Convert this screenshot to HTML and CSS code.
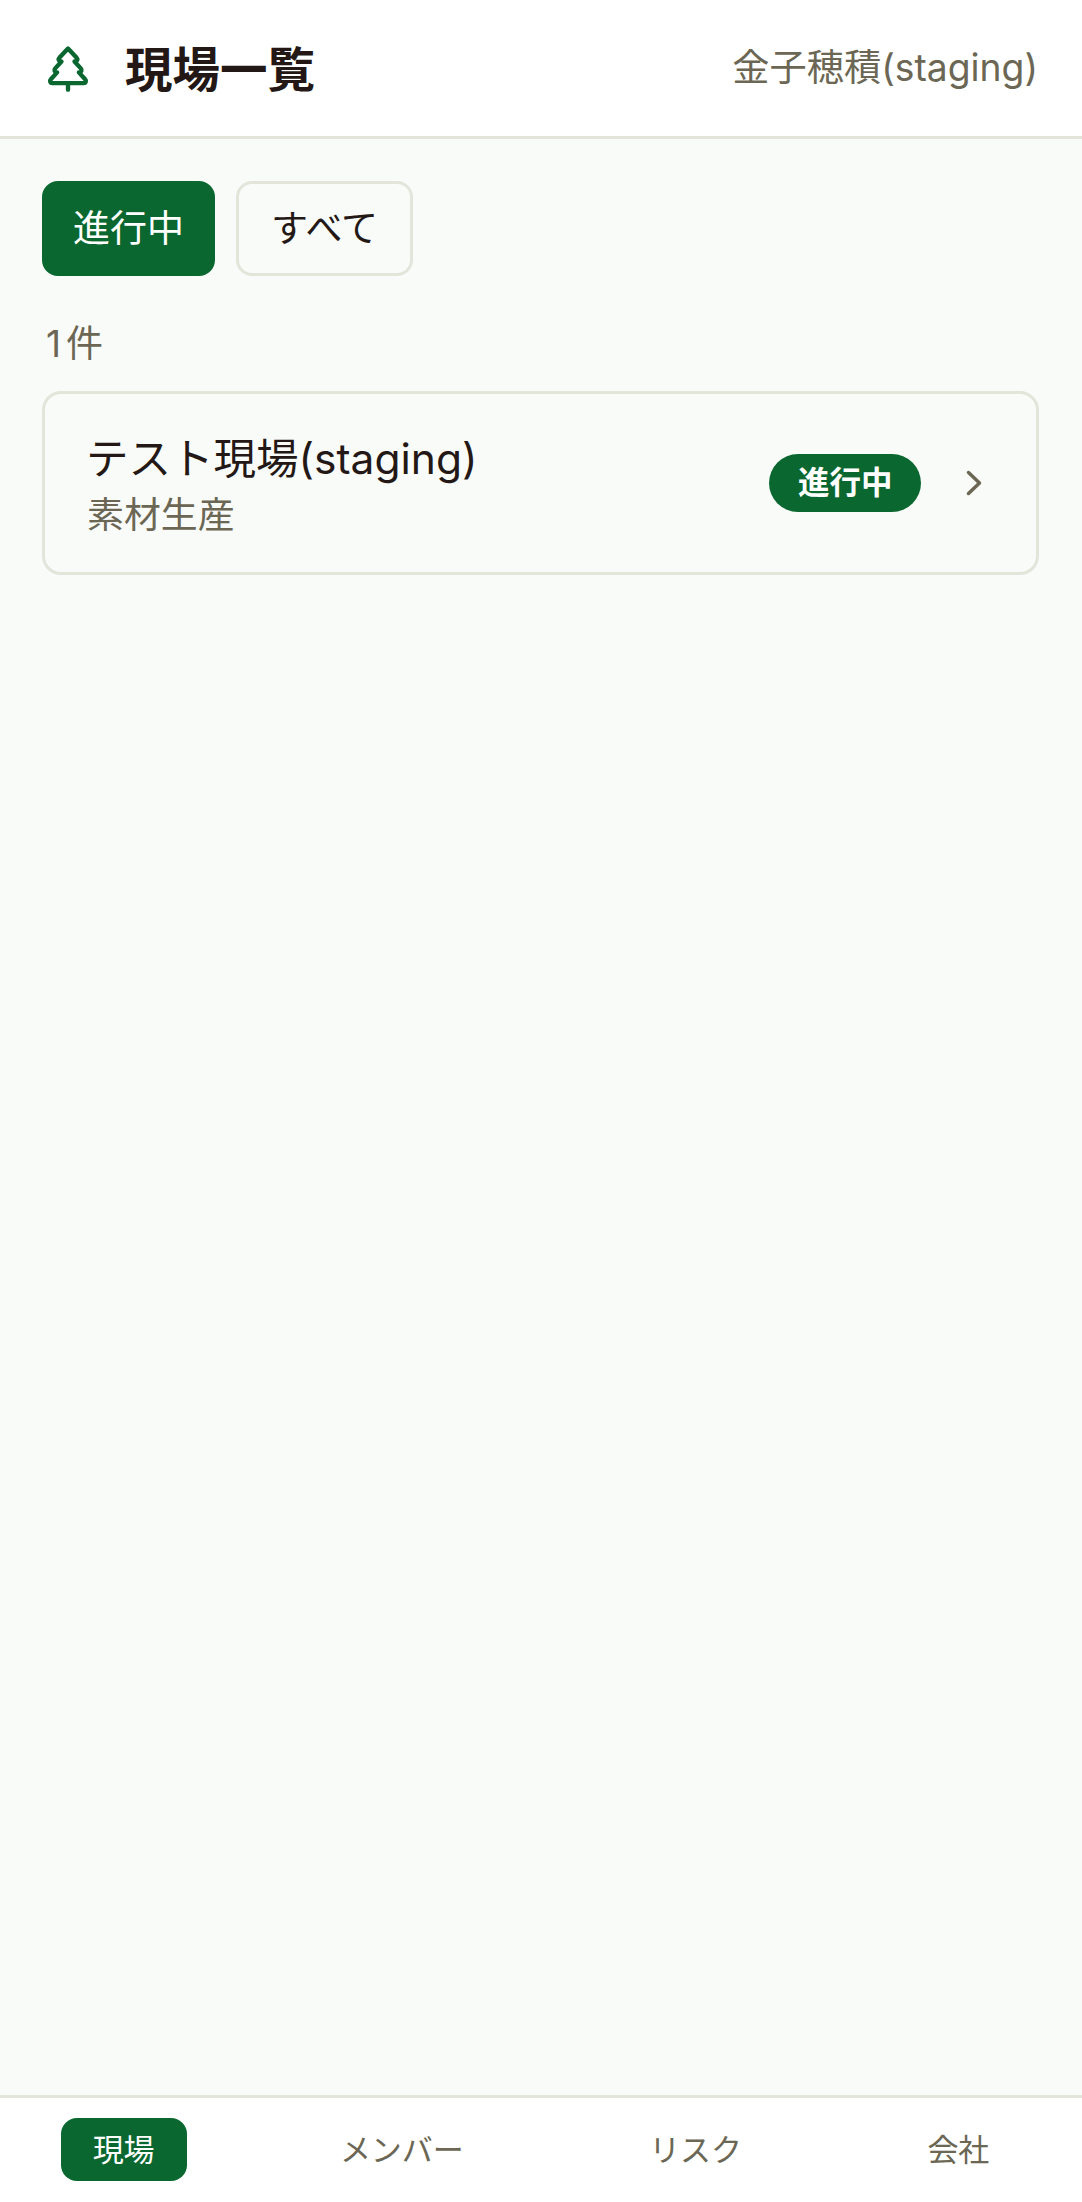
FILE: index.html
```html
<!DOCTYPE html>
<html lang="ja">
<head>
    <meta charset="UTF-8">
    <meta name="viewport" content="width=device-width, initial-scale=1.0">
    <title>現場一覧</title>
    <link rel="stylesheet" href="styles.css">
</head>
<body>

    <div class="app">
        <!-- Header -->
        <header class="header">
            <div class="header-left">
                <svg class="logo" viewBox="0 0 24 24" fill="none" stroke="currentColor" stroke-width="2" stroke-linecap="round" stroke-linejoin="round">
                    <path d="m17 14 3 3.3a1 1 0 0 1-.7 1.7H4.7a1 1 0 0 1-.7-1.7L7 14h-.3a1 1 0 0 1-.7-1.7L9 9h-.2A1 1 0 0 1 8 7.3L12 3l4 4.3a1 1 0 0 1-.8 1.7H15l3 3.3a1 1 0 0 1-.7 1.7H17Z"/>
                    <path d="M12 22v-3"/>
                </svg>
                <h1>現場一覧</h1>
            </div>
            <span class="user-name">金子穂積(staging)</span>
        </header>

        <!-- Site list -->
        <main class="main">
            <div class="tabs">
                <button class="tab tab-active">進行中</button>
                <button class="tab">すべて</button>
            </div>

            <p class="count">1件</p>

            <a class="site-card">
                <div class="site-info">
                    <div class="site-name">テスト現場(staging)</div>
                    <div class="site-type">素材生産</div>
                </div>
                <span class="badge">進行中</span>
                <svg class="chevron" viewBox="0 0 16 26" fill="none" stroke="currentColor" stroke-width="3.5" stroke-linecap="round" stroke-linejoin="round">
                    <path d="M2.5 2.5 13.5 13 2.5 23.5"/>
                </svg>
            </a>
        </main>

        <!-- Bottom nav -->
        <nav class="bottom-nav">
            <a class="nav-item nav-active">現場</a>
            <a class="nav-item">メンバー</a>
            <a class="nav-item">リスク</a>
            <a class="nav-item">会社</a>
        </nav>
    </div>

</body>
</html>
```

FILE: styles.css
```css
* {
    box-sizing: border-box;
}

body {
    font-family: Inter, "Noto Sans CJK JP", sans-serif;
    background-color: #f9fbf9;
    color: #231815;
    margin: 0;
}

.app {
    display: flex;
    flex-direction: column;
    height: 100vh;
}

.header {
    display: flex;
    align-items: center;
    justify-content: space-between;
    height: 139px;
    padding: 0 44px 0 42px;
    background: white;
    border-bottom: 3px solid #e3e4da;
}

.header-left {
    display: flex;
    align-items: center;
    gap: 31px;
}

.logo {
    width: 52px;
    height: 52px;
    color: #0a672f;
}

h1 {
    margin: 0;
    padding-top: 4px;
    font-size: 47.5px;
    font-weight: 700;
    line-height: 1.4;
}

.user-name {
    padding-bottom: 6px;
    font-size: 37.25px;
    color: #6b6754;
}

.main {
    flex: 1;
    padding: 42px 43px 0 42px;
}

.tabs {
    display: flex;
    gap: 21px;
}

.tab {
    height: 95px;
    padding: 0 32px 6px;
    border: 3px solid #e3e4da;
    border-radius: 16px;
    background: transparent;
    color: #231815;
    font-family: inherit;
    font-size: 37px;
}

.tab-active {
    padding: 0 28px 6px;
    background: #0a672f;
    border-color: #0a672f;
    color: white;
}

.count {
    margin: 46px 0 25px 4px;
    font-size: 37px;
    letter-spacing: 5px;
    line-height: 44px;
    color: #6b6754;
}

.site-card {
    display: flex;
    align-items: center;
    height: 184px;
    padding: 0 54px 0 41px;
    border: 3px solid #e3e4da;
    border-radius: 19px;
}

.site-info {
    flex: 1;
}

.site-name {
    font-size: 42.5px;
    line-height: 63px;
}

.site-type {
    padding-left: 1px;
    font-size: 36.9px;
    line-height: 50px;
    color: #6b6754;
}

.badge {
    padding: 0 28.5px;
    height: 58px;
    line-height: 58px;
    border-radius: 29px;
    background: #0a672f;
    color: white;
    font-size: 31.5px;
    font-weight: 700;
}

.chevron {
    width: 16px;
    height: 26px;
    margin-left: 45px;
    color: #6b6754;
}

.bottom-nav {
    display: flex;
    justify-content: space-around;
    align-items: center;
    height: 107px;
    padding-bottom: 1px;
    background: white;
    border-top: 3px solid #e3e4da;
}

.nav-item {
    height: 63px;
    line-height: 64px;
    padding: 0 32px;
    border-radius: 16px;
    font-size: 31px;
    color: #6b6754;
}

.nav-active {
    background: #0a672f;
    color: white;
}
```
